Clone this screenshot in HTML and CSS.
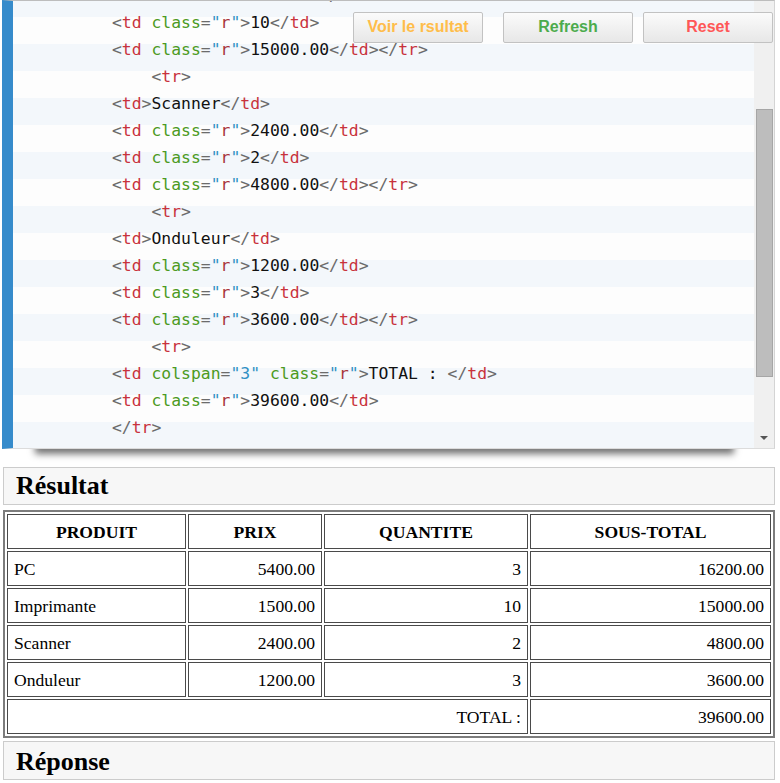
FILE: index.html
```html
<!DOCTYPE html>
<html lang="fr">
<head>
<meta charset="utf-8">
<title>Résultat</title>
<link rel="stylesheet" href="styles.css">
</head>
<body>
<div class="editor">
  <div class="code-view">
<pre class="code"><span class="ln">        <span class="pu">&lt;</span><span class="tg">td</span> <span class="at">class</span><span class="pu">=</span><span class="qt">"</span><span class="vr">r</span><span class="qt">"</span><span class="pu">&gt;</span>1500.00<span class="pu">&lt;/</span><span class="tg">td</span><span class="pu">&gt;</span></span>
<span class="ln">        <span class="pu">&lt;</span><span class="tg">td</span> <span class="at">class</span><span class="pu">=</span><span class="qt">"</span><span class="vr">r</span><span class="qt">"</span><span class="pu">&gt;</span>10<span class="pu">&lt;/</span><span class="tg">td</span><span class="pu">&gt;</span></span>
<span class="ln">        <span class="pu">&lt;</span><span class="tg">td</span> <span class="at">class</span><span class="pu">=</span><span class="qt">"</span><span class="vr">r</span><span class="qt">"</span><span class="pu">&gt;</span>15000.00<span class="pu">&lt;/</span><span class="tg">td</span><span class="pu">&gt;&lt;/</span><span class="tg">tr</span><span class="pu">&gt;</span></span>
<span class="ln">            <span class="pu">&lt;</span><span class="tg">tr</span><span class="pu">&gt;</span></span>
<span class="ln">        <span class="pu">&lt;</span><span class="tg">td</span><span class="pu">&gt;</span>Scanner<span class="pu">&lt;/</span><span class="tg">td</span><span class="pu">&gt;</span></span>
<span class="ln">        <span class="pu">&lt;</span><span class="tg">td</span> <span class="at">class</span><span class="pu">=</span><span class="qt">"</span><span class="vr">r</span><span class="qt">"</span><span class="pu">&gt;</span>2400.00<span class="pu">&lt;/</span><span class="tg">td</span><span class="pu">&gt;</span></span>
<span class="ln">        <span class="pu">&lt;</span><span class="tg">td</span> <span class="at">class</span><span class="pu">=</span><span class="qt">"</span><span class="vr">r</span><span class="qt">"</span><span class="pu">&gt;</span>2<span class="pu">&lt;/</span><span class="tg">td</span><span class="pu">&gt;</span></span>
<span class="ln">        <span class="pu">&lt;</span><span class="tg">td</span> <span class="at">class</span><span class="pu">=</span><span class="qt">"</span><span class="vr">r</span><span class="qt">"</span><span class="pu">&gt;</span>4800.00<span class="pu">&lt;/</span><span class="tg">td</span><span class="pu">&gt;&lt;/</span><span class="tg">tr</span><span class="pu">&gt;</span></span>
<span class="ln">            <span class="pu">&lt;</span><span class="tg">tr</span><span class="pu">&gt;</span></span>
<span class="ln">        <span class="pu">&lt;</span><span class="tg">td</span><span class="pu">&gt;</span>Onduleur<span class="pu">&lt;/</span><span class="tg">td</span><span class="pu">&gt;</span></span>
<span class="ln">        <span class="pu">&lt;</span><span class="tg">td</span> <span class="at">class</span><span class="pu">=</span><span class="qt">"</span><span class="vr">r</span><span class="qt">"</span><span class="pu">&gt;</span>1200.00<span class="pu">&lt;/</span><span class="tg">td</span><span class="pu">&gt;</span></span>
<span class="ln">        <span class="pu">&lt;</span><span class="tg">td</span> <span class="at">class</span><span class="pu">=</span><span class="qt">"</span><span class="vr">r</span><span class="qt">"</span><span class="pu">&gt;</span>3<span class="pu">&lt;/</span><span class="tg">td</span><span class="pu">&gt;</span></span>
<span class="ln">        <span class="pu">&lt;</span><span class="tg">td</span> <span class="at">class</span><span class="pu">=</span><span class="qt">"</span><span class="vr">r</span><span class="qt">"</span><span class="pu">&gt;</span>3600.00<span class="pu">&lt;/</span><span class="tg">td</span><span class="pu">&gt;&lt;/</span><span class="tg">tr</span><span class="pu">&gt;</span></span>
<span class="ln">            <span class="pu">&lt;</span><span class="tg">tr</span><span class="pu">&gt;</span></span>
<span class="ln">        <span class="pu">&lt;</span><span class="tg">td</span> <span class="at">colspan</span><span class="pu">=</span><span class="qt">"3"</span> <span class="at">class</span><span class="pu">=</span><span class="qt">"</span><span class="vr">r</span><span class="qt">"</span><span class="pu">&gt;</span>TOTAL : <span class="pu">&lt;/</span><span class="tg">td</span><span class="pu">&gt;</span></span>
<span class="ln">        <span class="pu">&lt;</span><span class="tg">td</span> <span class="at">class</span><span class="pu">=</span><span class="qt">"</span><span class="vr">r</span><span class="qt">"</span><span class="pu">&gt;</span>39600.00<span class="pu">&lt;/</span><span class="tg">td</span><span class="pu">&gt;</span></span>
<span class="ln">        <span class="pu">&lt;/</span><span class="tg">tr</span><span class="pu">&gt;</span></span>
<span class="ln">        <span class="pu">&lt;/</span><span class="tg">tbody</span><span class="pu">&gt;</span></span></pre>
  </div>
  <div class="vscroll">
    <div class="thumb"></div>
    <div class="arrow-down"></div>
  </div>
  <div class="toolbar">
    <button class="btn btn-voir">Voir le rsultat</button>
    <button class="btn btn-refresh">Refresh</button>
    <button class="btn btn-reset">Reset</button>
  </div>
</div>

<main class="output">
  <div class="panel"><h2 class="panel-title">Résultat</h2></div>
  <table class="result">
    <thead>
      <tr>
        <th class="c1">PRODUIT</th>
        <th class="c2">PRIX</th>
        <th class="c3">QUANTITE</th>
        <th class="c4">SOUS-TOTAL</th>
      </tr>
    </thead>
    <tbody>
      <tr><td>PC</td><td class="r">5400.00</td><td class="r">3</td><td class="r">16200.00</td></tr>
      <tr><td>Imprimante</td><td class="r">1500.00</td><td class="r">10</td><td class="r">15000.00</td></tr>
      <tr><td>Scanner</td><td class="r">2400.00</td><td class="r">2</td><td class="r">4800.00</td></tr>
      <tr><td>Onduleur</td><td class="r">1200.00</td><td class="r">3</td><td class="r">3600.00</td></tr>
      <tr><td colspan="3" class="r">TOTAL : </td><td class="r">39600.00</td></tr>
    </tbody>
  </table>
  <div class="panel panel-last"><h2 class="panel-title">Réponse</h2></div>
</main>
</body>
</html>
```
FILE: styles.css
```css
html {
  margin: 0;
  padding: 0;
  background: #ffffff;
}

body {
  margin: 0;
  padding: 0;
  font-family: "Liberation Serif", "Times New Roman", serif;
  color: #000;
}

/* ---------- code editor ---------- */
.editor {
  position: relative;
  display: flex;
  width: 773px;
  height: 449px;
  box-sizing: border-box;
  margin-left: 2px;
  border-top: 1px solid #bdbdbd;
  border-right: 1px solid #d4d4d4;
  border-bottom: 1px solid #dcdcdc;
  border-left: 11px solid #368bcb;
  background: #fff;
}

.editor::after {
  content: "";
  position: absolute;
  left: 22px;
  right: 40px;
  bottom: 2px;
  height: 12px;
  box-shadow: 0 8px 7px rgba(0, 0, 0, 0.55);
  z-index: -1;
}

.code-view {
  flex: 1;
  overflow: hidden;
  background: repeating-linear-gradient(to bottom,
      #f3f7fb 0, #f3f7fb 27px,
      #fdfdfd 27px, #fdfdfd 54px);
  background-position: 0 -11px;
}

.code {
  margin: -19px 0 0 0;
  padding-left: 20px;
  font-family: "DejaVu Sans Mono", "Liberation Mono", monospace;
  font-size: 16.4px;
  line-height: 27px;
  color: #111;
  white-space: pre;
}

.ln { display: inline; }
.pu { color: #6b6b6b; }
.tg { color: #c8323c; }
.at { color: #4c9a22; }
.qt { color: #2f90c4; }
.vr { color: #a8343a; }

.vscroll {
  width: 20px;
  background: #f0f0f0;
  display: flex;
  flex-direction: column;
  align-items: center;
}

.thumb {
  margin-top: 108px;
  width: 15px;
  height: 266px;
  background: #bdbdbd;
  border: 1px solid #a6a6a6;
}

.arrow-down {
  margin-top: auto;
  margin-bottom: 8px;
  width: 0;
  height: 0;
  border-left: 4px solid transparent;
  border-right: 4px solid transparent;
  border-top: 4px solid #555;
}

.toolbar {
  position: absolute;
  top: 11px;
  left: 340px;
  display: flex;
  gap: 10px;
  z-index: 2;
}

.btn {
  box-sizing: border-box;
  width: 130px;
  height: 31px;
  padding: 0 0 2px 0;
  border: 1px solid #c2c2c2;
  border-radius: 2px;
  background: linear-gradient(to bottom, #fbfbfb, #e7e7e7);
  font-family: "Liberation Sans", Arial, sans-serif;
  font-size: 16px;
  font-weight: bold;
  cursor: pointer;
}

.btn-voir { color: #ffbd4a; margin-right: 10px; }
.btn-refresh { color: #4cab4c; }
.btn-reset { color: #ff5757; }

/* ---------- output ---------- */
.output {
  margin-left: 3px;
  width: 772px;
  padding-top: 18px;
}

.panel {
  box-sizing: border-box;
  height: 38px;
  border: 1px solid #cccccc;
  background: #f7f7f7;
}

.panel-title {
  margin: 0;
  padding-left: 12px;
  font-family: "Liberation Serif", "Times New Roman", serif;
  font-size: 26px;
  font-weight: bold;
  line-height: 36px;
}

.panel-last {
  margin-top: 3px;
  height: 39px;
}

.panel-last .panel-title {
  line-height: 39px;
}

.result {
  margin-top: 5px;
  width: 772px;
  table-layout: fixed;
  border-collapse: separate;
  border-spacing: 2px;
  border: 2px solid #7c7c7c;
  font-family: "Liberation Serif", "Times New Roman", serif;
  font-size: 17.6px;
}

.result th,
.result td {
  border: 1px solid #4a4a4a;
  padding: 7px 6px 6px 6px;
  line-height: 20px;
  text-align: left;
}

.result th {
  text-align: center;
  font-weight: bold;
}

.result .r { text-align: right; }

.c1 { width: 165px; }
.c2 { width: 120px; }
.c3 { width: 190px; }
.c4 { width: 227px; }
```
